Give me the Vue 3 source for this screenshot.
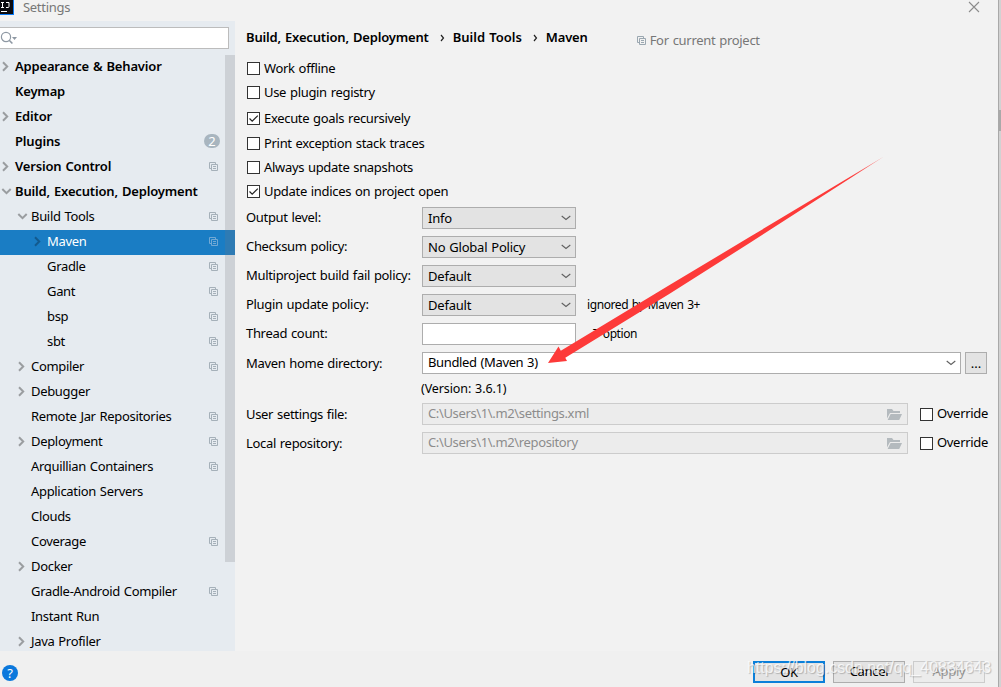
<script setup>
import { ref } from 'vue'

const query = ref('')

const tree = [
  { label: 'Appearance & Behavior', level: 0, arrow: 'right' },
  { label: 'Keymap', level: 0 },
  { label: 'Editor', level: 0, arrow: 'right' },
  { label: 'Plugins', level: 0, count: 2 },
  { label: 'Version Control', level: 0, arrow: 'right', project: true },
  { label: 'Build, Execution, Deployment', level: 0, arrow: 'down' },
  { label: 'Build Tools', level: 1, arrow: 'down', project: true },
  { label: 'Maven', level: 2, arrow: 'right', project: true, selected: true },
  { label: 'Gradle', level: 2, project: true },
  { label: 'Gant', level: 2, project: true },
  { label: 'bsp', level: 2, project: true },
  { label: 'sbt', level: 2, project: true },
  { label: 'Compiler', level: 1, arrow: 'right', project: true },
  { label: 'Debugger', level: 1, arrow: 'right' },
  { label: 'Remote Jar Repositories', level: 1, project: true },
  { label: 'Deployment', level: 1, arrow: 'right', project: true },
  { label: 'Arquillian Containers', level: 1, project: true },
  { label: 'Application Servers', level: 1 },
  { label: 'Clouds', level: 1 },
  { label: 'Coverage', level: 1, project: true },
  { label: 'Docker', level: 1, arrow: 'right' },
  { label: 'Gradle-Android Compiler', level: 1, project: true },
  { label: 'Instant Run', level: 1 },
  { label: 'Java Profiler', level: 1, arrow: 'right' },
]

const options = ref([
  { label: 'Work offline', checked: false },
  { label: 'Use plugin registry', checked: false },
  { label: 'Execute goals recursively', checked: true },
  { label: 'Print exception stack traces', checked: false },
  { label: 'Always update snapshots', checked: false },
  { label: 'Update indices on project open', checked: true },
])

const selects = [
  { label: 'Output level:', value: 'Info' },
  { label: 'Checksum policy:', value: 'No Global Policy' },
  { label: 'Multiproject build fail policy:', value: 'Default' },
  { label: 'Plugin update policy:', value: 'Default', hint: 'ignored by Maven 3+' },
]

const paths = [
  { label: 'User settings file:', value: 'C:\\Users\\1\\.m2\\settings.xml' },
  { label: 'Local repository:', value: 'C:\\Users\\1\\.m2\\repository' },
]
</script>

<template>
  <div class="dialog">
    <header class="titlebar">
      <svg class="logo" width="14" height="15" viewBox="0 0 14 15">
        <rect width="14" height="15" fill="#087cfa" />
        <rect width="13" height="14" fill="#0b0b10" />
        <path d="M1 2.500h3M2.500 2.500v5M1 7.500h3M6 2.500h3v4q0 1-1 1H6M1 11.500h6" fill="none" stroke="#fff" />
      </svg>
      <span class="titlebar__text">Settings</span>
      <svg class="titlebar__close" width="12" height="12" viewBox="0 0 12 12">
        <path d="M1 1l10 10M11 1L1 11" fill="none" stroke="#8c8c8c" stroke-width="1.1" />
      </svg>
    </header>

    <div class="body">
      <aside class="sidebar">
        <div class="search">
          <svg width="18" height="16" viewBox="0 0 18 16">
            <circle cx="6" cy="7" r="4.600" fill="none" stroke="#8e98a3" stroke-width="1.200" />
            <path d="M9.200 10.300l3.200 3.200" stroke="#8e98a3" stroke-width="1.600" />
            <path d="M12 7h5l-2.500 3z" fill="#8e98a3" />
          </svg>
          <input v-model="query" type="text" aria-label="Search" />
        </div>

        <div class="tree">
          <ul class="tree__list">
            <li
              v-for="node in tree"
              :key="node.label"
              :class="['node', `node--l${node.level}`, { 'node--selected': node.selected }]"
            >
              <span class="node__arrow">
                <svg v-if="node.arrow === 'right'" width="11" height="11" viewBox="0 0 11 11">
                  <path d="M3 1.300l4.200 4.200L3 9.700" fill="none" stroke="currentColor" stroke-width="2" />
                </svg>
                <svg v-else-if="node.arrow === 'down'" width="13" height="11" viewBox="-1 0 13 11">
                  <path d="M1.300 3l4.200 4.200L9.700 3" fill="none" stroke="currentColor" stroke-width="2" />
                </svg>
              </span>
              <span class="node__label">{{ node.label }}</span>
              <span v-if="node.count" class="node__count">{{ node.count }}</span>
              <svg v-if="node.project" class="node__project" width="9" height="9" viewBox="0 0 9 9">
                <path d="M2 6.500H.5v-6h6V2M2.500 2.500h6v6h-6zM4 4.500h3M4 6.500h3" fill="none" stroke="currentColor" />
              </svg>
            </li>
          </ul>
          <div class="tree__thumb"></div>
        </div>
      </aside>

      <main class="content">
        <div class="crumbs">
          <span>Build, Execution, Deployment</span>
          <svg class="crumbs__sep" width="5" height="8" viewBox="0 0 5 8">
            <path d="M1 1l2.500 3L1 7" fill="none" stroke="#222" stroke-width="1.200" />
          </svg>
          <span class="crumbs__tools">Build Tools</span>
          <svg class="crumbs__sep" width="5" height="8" viewBox="0 0 5 8">
            <path d="M1 1l2.500 3L1 7" fill="none" stroke="#222" stroke-width="1.200" />
          </svg>
          <span>Maven</span>
          <span class="scope">
            <svg width="9" height="9" viewBox="0 0 9 9">
              <path d="M2 6.500H.5v-6h6V2M2.500 2.500h6v6h-6zM4 4.500h3M4 6.500h3" fill="none" stroke="#9aa7b0" />
            </svg>
            For current project
          </span>
        </div>

        <div class="options">
          <label v-for="opt in options" :key="opt.label" class="check">
            <span class="check__box" @click="opt.checked = !opt.checked">
              <svg v-if="opt.checked" width="11" height="11" viewBox="0 0 11 11">
                <path d="M1.500 5.500l2.700 2.700L9.800 2.600" fill="none" stroke="#222" stroke-width="1.200" />
              </svg>
            </span>
            <span class="check__label">{{ opt.label }}</span>
          </label>
        </div>

        <div class="form">
          <div v-for="row in selects" :key="row.label" class="row">
            <span class="row__label">{{ row.label }}</span>
            <div class="field field--select">
              <span>{{ row.value }}</span>
              <svg width="10" height="6" viewBox="0 0 10 6">
                <path d="M.7 1L5 4.500 9.300 1" fill="none" stroke="#606060" stroke-width="1.100" />
              </svg>
            </div>
            <span v-if="row.hint" class="row__hint">{{ row.hint }}</span>
          </div>

          <div class="row">
            <span class="row__label">Thread count:</span>
            <div class="field field--input"></div>
            <span class="row__hint row__hint--thread">-T option</span>
          </div>

          <div class="row row--home">
            <span class="row__label">Maven home directory:</span>
            <div class="field field--combo">
              <span class="field__text">Bundled (Maven 3)</span>
              <svg width="10" height="6" viewBox="0 0 10 6">
                <path d="M.7 1L5 4.500 9.300 1" fill="none" stroke="#606060" stroke-width="1.100" />
              </svg>
            </div>
            <button class="browse" type="button">...</button>
          </div>

          <div class="version">(Version: 3.6.1)</div>

          <div v-for="row in paths" :key="row.label" class="row row--path">
            <span class="row__label">{{ row.label }}</span>
            <div class="field field--path">
              <span class="field__text">{{ row.value }}</span>
              <svg width="15" height="11" viewBox="0 0 15 11">
                <path d="M0 0h5l1.500 2H13v2H3L0 9.500z" fill="#b4babe" />
                <path d="M3.600 5H15l-2.800 6H.6z" fill="#b4babe" />
              </svg>
            </div>
            <label class="check check--override">
              <span class="check__box"></span>
              <span class="check__label">Override</span>
            </label>
          </div>
        </div>
      </main>
    </div>

    <footer class="footer">
      <span class="help">?</span>
      <div class="footer__buttons">
        <button class="btn btn--default" type="button">OK</button>
        <button class="btn" type="button">Cancel</button>
        <button class="btn btn--disabled" type="button" disabled>Apply</button>
      </div>
    </footer>

    <div class="edge"><div class="edge__thumb"></div></div>

    <svg class="pointer" width="340" height="210" viewBox="546 156 340 210">
      <defs>
        <linearGradient id="tail" gradientUnits="userSpaceOnUse" x1="850" y1="178" x2="884" y2="157">
          <stop offset="0" stop-color="#fd3a39" />
          <stop offset="1" stop-color="#fd3a39" stop-opacity="0.600" />
        </linearGradient>
      </defs>
      <path
        d="M548 363L558.500 346.500l2.300 4.300L670 284.800 750 236.800 884 156.500 750 242.800 670 293.400 565.300 357.800l1.700 3.200z"
        fill="url(#tail)"
      />
    </svg>
    <span class="watermark">https://blog.csdn.net/qq_40834643</span>
  </div>
</template>

<style>
body {
  margin: 0;
  overflow: hidden;
}
</style>

<style scoped>
.dialog {
  position: relative;
  display: flex;
  flex-direction: column;
  box-sizing: border-box;
  width: 1001px;
  height: 687px;
  overflow: hidden;
  background: #f2f2f2;
  color: #000;
  font-family: 'Noto Sans', 'Open Sans', sans-serif;
  font-size: 13px;
  line-height: 20px;
  letter-spacing: -0.32px;
  word-spacing: 0.8px;
  white-space: nowrap;
}

svg {
  display: block;
  flex: none;
}

.titlebar {
  display: flex;
  align-items: flex-start;
  height: 21px;
  flex: none;
}

.titlebar__text {
  margin: 0 auto 0 9px;
  color: #777;
  letter-spacing: -0.3px;
  line-height: 14px;
}

.titlebar__close {
  margin: 1px 21px 0 0;
}

.body {
  display: flex;
  height: 630px;
  flex: none;
}

.sidebar {
  display: flex;
  flex-direction: column;
  width: 235px;
  flex: none;
  background: #e6ebf0;
}

.search {
  display: flex;
  align-items: center;
  box-sizing: border-box;
  width: 229px;
  height: 22px;
  margin: 6px 0;
  border: 1px solid #bcbcbc;
  border-left: 0;
  background: #fff;
}

.search input {
  flex: 1;
  min-width: 0;
  height: 18px;
  padding: 0;
  border: 0;
  outline: 0;
}

.tree {
  position: relative;
  flex: 1;
  min-height: 0;
  overflow: hidden;
}

.tree__list {
  margin: 0;
  padding: 0;
  list-style: none;
}

.tree__thumb {
  position: absolute;
  top: 0;
  right: 0;
  width: 10px;
  height: 507px;
  background: rgba(120, 120, 125, 0.22);
}

.node {
  display: flex;
  align-items: center;
  box-sizing: border-box;
  height: 25px;
  padding: 0 17px 2px 0;
}

.node--l0 {
  font-weight: 600;
  letter-spacing: -0.17px;
}

.node--l1 {
  padding-left: 16px;
}

.node--l2 {
  padding-left: 32px;
}

.node--selected {
  background: #1a7dc4;
  color: #fff;
}

.node__arrow {
  width: 15px;
  flex: none;
  color: #9a9da0;
}

.node--selected .node__arrow {
  color: #135a8e;
}

.node__label {
  flex: 1;
  margin-top: -2px;
}

.node__count {
  width: 16px;
  height: 14px;
  margin: -1px -2px 0 0;
  border-radius: 7px;
  background: #a8b5bf;
  color: #fff;
  font-weight: 400;
  line-height: 14px;
  text-align: center;
}

.node__project {
  color: #a5b0b9;
}

.node--selected .node__project {
  color: #72a9d4;
}

.content {
  flex: none;
  width: 752px;
  padding-left: 11px;
}

.crumbs {
  display: flex;
  align-items: center;
  height: 20px;
  margin-top: 6px;
  font-weight: 600;
  letter-spacing: -0.17px;
}

.crumbs__sep {
  margin: 1px 8px 0 11px;
}

.crumbs__tools {
  letter-spacing: 0;
}

.scope {
  display: flex;
  align-items: center;
  gap: 4px;
  margin: 6px 0 0 49px;
  color: #777;
  font-weight: 400;
  letter-spacing: -0.3px;
}

.options {
  margin-top: 11px;
}

.check {
  display: flex;
  align-items: center;
  gap: 4px;
  height: 21px;
}

.options .check {
  margin: 0 0 3px 1px;
}

.options .check:nth-child(2) {
  margin-bottom: 5px;
}

.options .check:nth-child(3) {
  margin-bottom: 4px;
}

.check__box {
  box-sizing: border-box;
  width: 13px;
  height: 13px;
  border: 1px solid #333;
  background: #fff;
}

.check__label {
  margin-top: -2px;
}

.form {
  margin-top: 5px;
}

.row {
  display: flex;
  align-items: center;
  height: 22px;
  margin-bottom: 7px;
}

.row__label {
  width: 176px;
  flex: none;
  margin-top: -2px;
}

.row--home .row__label,
.row--path .row__label {
  margin-top: 0;
}

.row__hint {
  margin: -1px 0 0 11px;
  font-size: 12px;
  letter-spacing: -0.4px;
}

.row__hint--thread {
  margin-left: 14px;
}

.field {
  display: flex;
  align-items: center;
  justify-content: space-between;
  box-sizing: border-box;
  width: 154px;
  height: 22px;
  padding: 0 4px 0 5px;
  border: 1px solid #adadad;
  background: #e3e3e3;
  letter-spacing: -0.22px;
}

.field--input,
.field--combo {
  background: #fff;
}

.field--combo {
  width: 539px;
  letter-spacing: -0.36px;
}

.field--path {
  width: 486px;
  padding-right: 5px;
  border-color: #ccc;
  background: #ececec;
  color: #8c8c8c;
  letter-spacing: -0.36px;
}

.field__text {
  margin-top: -2px;
}

.browse {
  box-sizing: border-box;
  width: 22px;
  height: 22px;
  margin-left: 4px;
  padding: 0;
  border: 1px solid #adadad;
  background: #e3e3e3;
  color: #000;
  font: inherit;
  line-height: 18px;
}

.version {
  height: 20px;
  margin: -2px 0 4px 175px;
  font-size: 12.500px;
  letter-spacing: -0.1px;
}

.check--override {
  margin-left: 12px;
}

.footer {
  display: flex;
  align-items: flex-start;
  justify-content: space-between;
  box-sizing: border-box;
  height: 36px;
  padding: 10px 16px 0 2px;
  background: #f0f0f0;
}

.help {
  width: 16px;
  height: 16px;
  margin-top: 4px;
  border-radius: 50%;
  background: #0b78dc;
  color: #fff;
  line-height: 16px;
  text-align: center;
}

.footer__buttons {
  display: flex;
  gap: 8px;
}

.btn {
  box-sizing: border-box;
  width: 72px;
  height: 22px;
  padding: 0 0 2px;
  border: 1px solid #adadad;
  background: #e3e3e3;
  color: #000;
  font: inherit;
  letter-spacing: -0.3px;
  line-height: 18px;
}

.btn--default {
  border: 2px solid #0b7fd9;
}

.btn--disabled {
  border-color: #ccc;
  background: #ececec;
  color: #9a9a9a;
}

.edge {
  position: absolute;
  top: 0;
  right: 0;
  width: 2px;
  height: 687px;
  border-left: 1px solid #a9a9a9;
  background: #d2d2d2;
}

.edge__thumb {
  height: 21px;
  margin-top: 110px;
  background: #a9a9a9;
}

.pointer {
  position: absolute;
  top: 156px;
  left: 546px;
}

.watermark {
  position: absolute;
  top: 658px;
  left: 747px;
  color: rgba(255, 255, 255, 0.75);
  font-family: 'Liberation Sans', Arial, sans-serif;
  font-size: 16px;
  letter-spacing: -0.04px;
  text-shadow: 1px 1px 1px rgba(0, 0, 0, 0.22);
  pointer-events: none;
}
</style>
